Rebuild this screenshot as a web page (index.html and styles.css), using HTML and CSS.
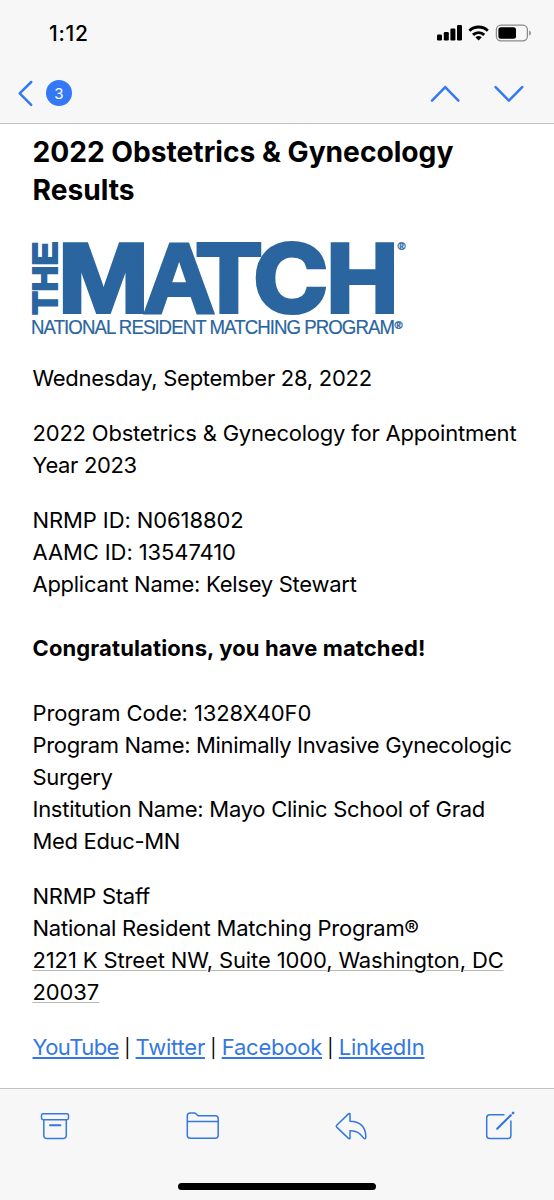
FILE: index.html
```html
<!DOCTYPE html>
<html lang="en">
<head>
<meta charset="utf-8">
<title>2022 Obstetrics &amp; Gynecology Results</title>
<link rel="stylesheet" href="styles.css">
</head>
<body>
<header class="top">
  <div class="status">
    <span class="time">1:12</span>
    <svg class="status-icons" width="96" height="20" viewBox="0 0 96 20">
      <rect x="1" y="11.5" width="5" height="6" rx="1.2"/>
      <rect x="7.8" y="9" width="5" height="8.500" rx="1.2"/>
      <rect x="14.400" y="5.500" width="5" height="12" rx="1.2"/>
      <rect x="21" y="2" width="5" height="15.500" rx="1.2"/>
      <g fill="none" stroke="#000" stroke-width="2.900">
        <path d="M33.400 7.800a13.200 13.200 0 0 1 18.400 0"/>
        <path d="M37 11.900a8 8 0 0 1 11.200 0"/>
      </g>
      <path d="M39.400 14.300a4.600 4.600 0 0 1 6.400 0l-3.200 3.300z"/>
      <rect x="60.400" y="2.200" width="31" height="15.600" rx="4.500" fill="none" stroke="#8b8b8b" stroke-width="1.300"/>
      <rect x="62.400" y="4.200" width="17.600" height="11.600" rx="2.500"/>
      <path d="M93.200 7.400c2.200.7 2.200 4.500 0 5.200z" fill="#8b8b8b"/>
    </svg>
  </div>
  <nav class="nav">
    <svg class="back" width="16" height="28" viewBox="0 0 16 28"><path d="M15.200 3L3.700 14.400 15.200 25.800"/></svg>
    <span class="count">3</span>
    <svg class="arrow" width="30" height="18" viewBox="0 0 30 18"><path d="M2 15.600L15.200 2.200 28.400 15.600"/></svg>
    <svg class="arrow" width="30" height="18" viewBox="0 0 30 18"><path d="M1.600 2.200L14.900 15.600 28.200 2.200"/></svg>
  </nav>
</header>
<main class="mail">
  <h1>2022 Obstetrics &amp; Gynecology<br>Results</h1>
  <svg class="logo" width="376" height="100" viewBox="32 239 376 100" role="img" aria-label="The Match">
    <text class="the" transform="translate(57 314) rotate(-90)" textLength="72.500" lengthAdjust="spacingAndGlyphs">THE</text>
    <g class="match">
      <text transform="translate(57.800 312.300) scale(1.110 1)">M</text>
      <text transform="translate(143.500 312.300) scale(1 1)">A</text>
      <text transform="translate(197.500 312.300) scale(1.040 1)">T</text>
      <text class="round" transform="translate(253.300 312.300) scale(1.080 1)">C</text>
      <text transform="translate(326 312.300) scale(1.020 1)">H</text>
    </g>
    <text class="reg" x="397.500" y="250">®</text>
    <text class="program" x="31" y="334.300" textLength="363" lengthAdjust="spacingAndGlyphs">NATIONAL RESIDENT MATCHING PROGRAM</text>
    <text class="reg" x="394.500" y="328.500">®</text>
  </svg>
  <p><span class="snug">Wednesday, September 28, 2022</span></p>
  <p><span class="close">2022 Obstetrics &amp; Gynecology for Appointment</span><br><span class="tight">Year 2023</span></p>
  <p><span class="wide">NRMP ID: N0618802</span><br><span class="wide">AAMC ID: 13547410</span><br><span class="snug">Applicant Name: Kelsey Stewart</span><br><br><b>Congratulations, you have matched!</b><br><br><span class="wide">Program Code: 1328X40F0</span><br><span class="tight">Program Name: Minimally Invasive Gynecologic</span><br><span class="tight">Surgery</span><br><span class="snug">Institution Name: Mayo Clinic School of Grad</span><br><span class="tight">Med Educ-MN</span></p>
  <p><span class="snug">NRMP Staff</span><br><span class="close">National Resident Matching Program®</span><br><span class="address">2121 K Street NW, Suite 1000, Washington, DC<br>20037</span></p>
  <p class="links"><a class="first" href="#">YouTube</a> <span class="sep">|</span> <a href="#">Twitter</a> <span class="sep">|</span> <a href="#">Facebook</a> <span class="sep">|</span> <a href="#">LinkedIn</a></p>
</main>
<footer class="bottom">
  <div class="tools">
    <svg width="30" height="30" viewBox="0 0 30 30"><rect x="1.500" y="2.700" width="27" height="6" rx="1.600"/><path d="M3.800 8.700v15.500q0 3.300 3.300 3.300h15.900q3.300 0 3.300-3.300V8.700"/><path d="M10 14.200h10.400" stroke-width="2"/></svg>
    <svg width="34" height="30" viewBox="0 0 34 30"><path d="M1.300 24.200V5.100q0-3 3-3h3.500q1.600 0 2.700 1.100l.9.900q.8.700 2 .7h15.800q3 0 3 3v16.400q0 3-3 3H4.300q-3 0-3-3zM1.300 10.400h30.900"/></svg>
    <svg width="34" height="30" viewBox="0 0 34 30"><path d="M15 2.600q-.9-.3-1.800.5L1.700 14.300q-.9.900 0 1.800l11.500 11q1 .9 1.800.4v-7.800q8.300-.4 12.800 6.500 1.300 1.900 2.500 1.300.8-.4.4-3.600Q29.500 10.800 15 10.300z"/></svg>
    <svg width="30" height="30" viewBox="0 0 30 30"><path d="M18.900 3.700H4.700q-3 0-3 3v17.700q0 3 3 3h18.200q3 0 3-3V10"/><path d="M12.200 17.700L25.800 4.200" stroke-width="2.200"/><path d="M27.900 2.100l.3-.3" stroke-width="2.600"/></svg>
  </div>
  <div class="home"></div>
</footer>
</body>
</html>
```
FILE: styles.css
```css
* { box-sizing: border-box; }
body {
  margin: 0;
  height: 1200px;
  display: flex;
  flex-direction: column;
  background: #fff;
  color: #000;
  font-family: Inter, "Liberation Sans", sans-serif;
}
svg { display: block; flex: none; overflow: visible; }
.top {
  flex: none;
  height: 124px;
  background: #f7f7f7;
  border-bottom: 1px solid #c2c2c4;
}
.status {
  display: flex;
  justify-content: space-between;
  align-items: flex-start;
  height: 76px;
  padding: 23px 22px 0 49px;
}
.time { font-size: 21px; line-height: 22px; font-weight: 550; letter-spacing: .7px; }
.nav { display: flex; align-items: center; height: 34px; padding: 0 30px 0 16px; }
.nav path { fill: none; stroke: #3478f6; stroke-width: 2.500; stroke-linecap: round; stroke-linejoin: round; }
.count {
  width: 26px;
  height: 26px;
  margin: 0 auto 0 14px;
  border-radius: 50%;
  background: #3478f6;
  color: #fff;
  font-size: 15px;
  line-height: 27px;
  text-align: center;
}
.arrow + .arrow { margin-left: 34px; }
.arrow { position: relative; top: 1px; }
.mail { flex: none; height: 964px; padding: 9px 0 0 32.500px; white-space: nowrap; }
h1 { margin: 0; font-size: 28.200px; line-height: 38px; font-weight: 700; letter-spacing: -.02px; }
.logo { margin: 30px 0 23px -.5px; }
.logo text { fill: #2a659f; font-family: "Liberation Sans", sans-serif; }
.logo .match text { font-size: 98.800px; font-weight: 700; stroke: #2a659f; stroke-width: 4px; }
.logo .match .round { font-family: Inter, sans-serif; font-size: 93.500px; }
.logo .the { font-size: 35px; font-weight: 700; stroke: #2a659f; stroke-width: 2px; }
.logo .program { font-size: 19.800px; letter-spacing: -1px; stroke: #2a659f; stroke-width: .2px; }
.logo .reg { font-size: 11px; font-weight: 700; stroke: #2a659f; stroke-width: .3px; }
.mail p { margin: 0 0 23px; font-size: 22px; line-height: 32.070px; }
.wide { letter-spacing: -.1px; }
.close { letter-spacing: -.210px; }
.snug { letter-spacing: -.270px; }
.tight { letter-spacing: -.340px; }
.mail b { letter-spacing: .120px; }
.address { letter-spacing: -.130px; text-decoration: underline #b8b8b8 1px; text-underline-offset: 2px; }
.links { word-spacing: -1.500px; }
.mail a { color: #3478df; letter-spacing: -.220px; text-decoration: underline 1.500px; text-underline-offset: 2px; }
.mail .first { letter-spacing: -.550px; }
.sep { padding: 0 .6px; font-size: 18.500px; }
.bottom { flex: none; height: 112px; background: #f7f7f7; border-top: 1px solid #c2c2c4; }
.tools { display: flex; justify-content: space-between; padding: 22px 39px 0 40px; }
.tools svg { fill: none; stroke: #3478df; stroke-width: 1.500; stroke-linecap: round; stroke-linejoin: round; }
.home { width: 198px; height: 7px; margin: 42px auto 0; border-radius: 4px; background: #000; }
```
